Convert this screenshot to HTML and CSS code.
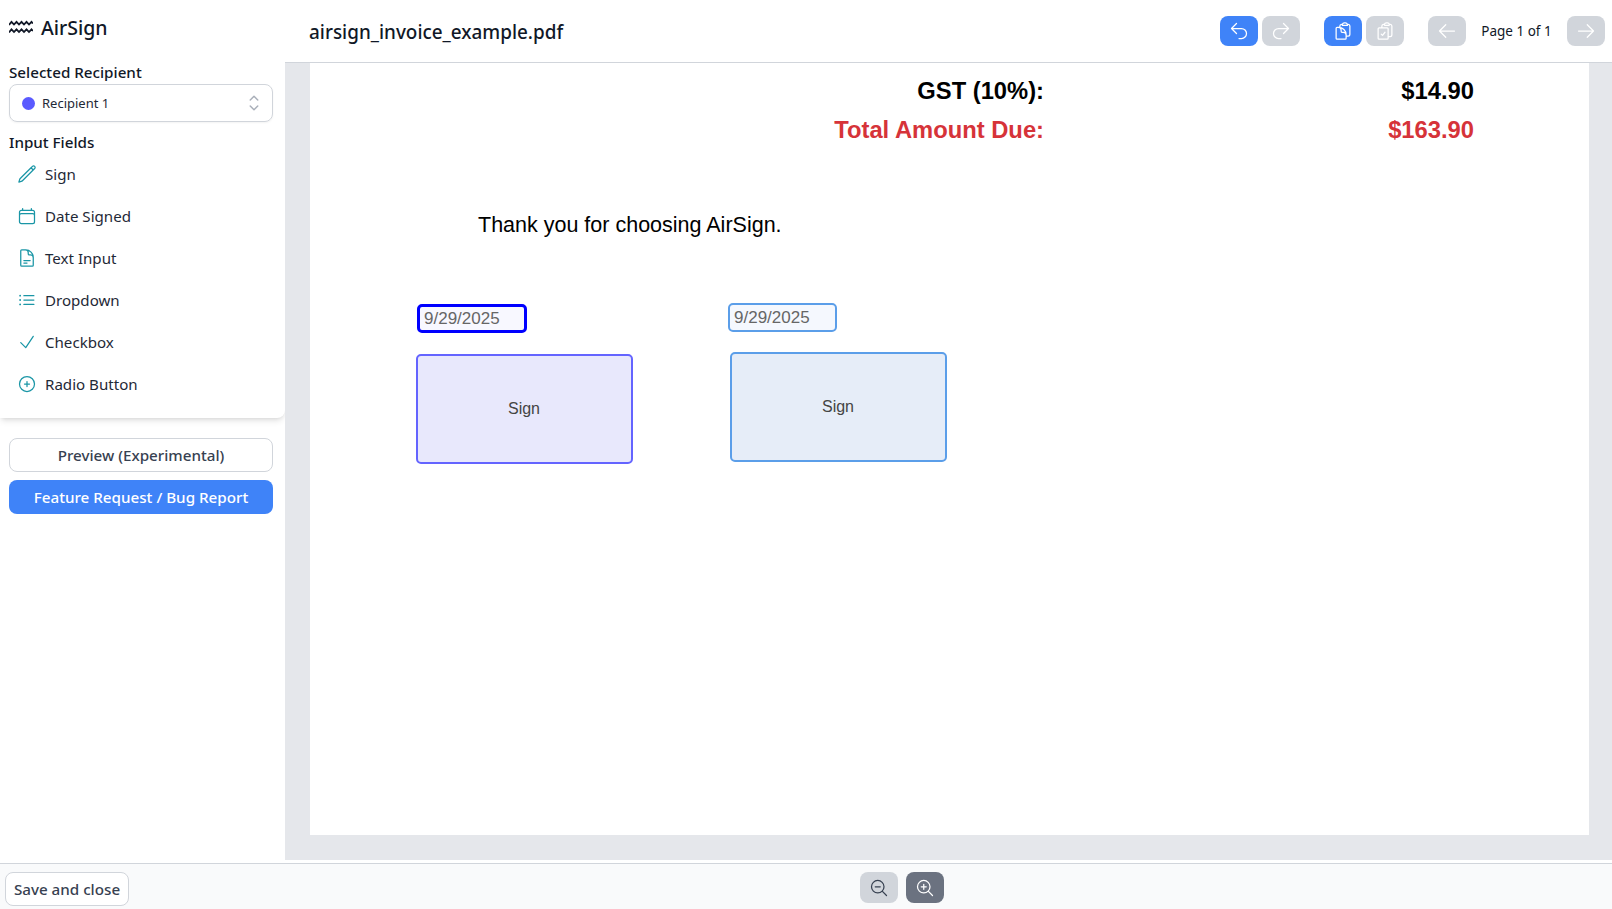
FILE: index.html
```html
<!DOCTYPE html>
<html lang="en">
<head>
<meta charset="utf-8">
<title>AirSign</title>
<link rel="stylesheet" href="styles.css">
</head>
<body>
<div class="app">
  <div class="top">
    <aside class="sidebar">
      <div class="panel">
        <div class="brand">
          <svg class="logo" viewBox="0 0 24 14" fill="none" stroke="currentColor" stroke-width="1.800"><path d="M0 5 2.500 1.800 5 4.500 7.500 1.800 10 4.500 12.500 1.800 15 4.500 17.500 1.800 20 4.500 22.500 1.800 24 3.500"/><path d="M0 12.500 2.500 9.300 5 12 7.500 9.300 10 12 12.500 9.300 15 12 17.500 9.300 20 12 22.500 9.300 24 11"/></svg>
          <span>AirSign</span>
        </div>
        <div class="label label-first">Selected Recipient</div>
        <div class="select">
          <span class="dot"></span>
          <span class="select-text">Recipient 1</span>
          <svg class="chev" viewBox="0 0 24 24" fill="none" stroke="currentColor" stroke-width="1.500"><path stroke-linecap="round" stroke-linejoin="round" d="M8.250 15 12 18.750 15.750 15m-7.500-6L12 5.250 15.750 9"/></svg>
        </div>
        <div class="label label-second">Input Fields</div>
        <ul class="fields">
          <li class="field"><svg class="ficon" viewBox="0 0 24 24" fill="none" stroke="currentColor" stroke-width="1.5"><path stroke-linecap="round" stroke-linejoin="round" d="m16.862 4.487 1.687-1.688a1.875 1.875 0 1 1 2.652 2.652L6.832 19.82a4.5 4.5 0 0 1-1.897 1.13l-2.685.8.8-2.685a4.5 4.5 0 0 1 1.13-1.897L16.863 4.487Zm0 0L19.5 7.125"/></svg>Sign</li>
          <li class="field"><svg class="ficon" viewBox="0 0 24 24" fill="none" stroke="currentColor" stroke-width="1.5"><path stroke-linecap="round" stroke-linejoin="round" d="M6.75 3v2.25M17.25 3v2.25M3 18.75V7.5a2.25 2.25 0 0 1 2.25-2.25h13.5A2.25 2.25 0 0 1 21 7.5v11.25m-18 0A2.25 2.25 0 0 0 5.25 21h13.5A2.25 2.25 0 0 0 21 18.75m-18 0v-7.5A2.25 2.25 0 0 1 5.25 9h13.5A2.25 2.25 0 0 1 21 11.25v7.5"/></svg>Date Signed</li>
          <li class="field"><svg class="ficon" viewBox="0 0 24 24" fill="none" stroke="currentColor" stroke-width="1.5"><path stroke-linecap="round" stroke-linejoin="round" d="M19.5 14.25v-2.625a3.375 3.375 0 0 0-3.375-3.375h-1.5A1.125 1.125 0 0 1 13.5 7.125v-1.5a3.375 3.375 0 0 0-3.375-3.375H8.25m0 12.75h7.5m-7.5 3H12M10.5 2.25H5.625c-.621 0-1.125.504-1.125 1.125v17.25c0 .621.504 1.125 1.125 1.125h12.75c.621 0 1.125-.504 1.125-1.125V11.25a9 9 0 0 0-9-9Z"/></svg>Text Input</li>
          <li class="field"><svg class="ficon" viewBox="0 0 24 24" fill="none" stroke="currentColor" stroke-width="1.5"><path stroke-linecap="round" stroke-linejoin="round" d="M8.25 6.75h12M8.25 12h12m-12 5.25h12M3.75 6.75h.007v.008H3.75V6.75Zm.375 0a.375.375 0 1 1-.75 0 .375.375 0 0 1 .75 0ZM3.75 12h.007v.008H3.75V12Zm.375 0a.375.375 0 1 1-.75 0 .375.375 0 0 1 .75 0Zm-.375 5.25h.007v.008H3.75v-.008Zm.375 0a.375.375 0 1 1-.75 0 .375.375 0 0 1 .75 0Z"/></svg>Dropdown</li>
          <li class="field"><svg class="ficon" viewBox="0 0 24 24" fill="none" stroke="currentColor" stroke-width="1.5"><path stroke-linecap="round" stroke-linejoin="round" d="m4.5 12.75 6 6 9-13.5"/></svg>Checkbox</li>
          <li class="field"><svg class="ficon" viewBox="0 0 24 24" fill="none" stroke="currentColor" stroke-width="1.5"><path stroke-linecap="round" stroke-linejoin="round" d="M12 9v6m3-3H9m12 0a9 9 0 1 1-18 0 9 9 0 0 1 18 0Z"/></svg>Radio Button</li>
        </ul>
      </div>
      <div class="actions">
        <button class="btn btn-outline">Preview (Experimental)</button>
        <button class="btn btn-primary">Feature Request / Bug Report</button>
      </div>
    </aside>
    <main class="main">
      <header class="toolbar">
        <div class="doc-title">airsign_invoice_example.pdf</div>
        <div class="tools">
          <div class="tool-group">
            <button class="tbtn blue"><svg class="ticon" viewBox="0 0 24 24" fill="none" stroke="currentColor" stroke-width="1.5"><path stroke-linecap="round" stroke-linejoin="round" d="M9 15 3 9m0 0 6-6M3 9h12a6 6 0 0 1 0 12h-3"/></svg></button>
            <button class="tbtn gray"><svg class="ticon" viewBox="0 0 24 24" fill="none" stroke="currentColor" stroke-width="1.5"><path stroke-linecap="round" stroke-linejoin="round" d="m15 15 6-6m0 0-6-6m6 6H9a6 6 0 0 0 0 12h3"/></svg></button>
          </div>
          <div class="tool-group">
            <button class="tbtn blue"><svg class="ticon" viewBox="0 0 24 24" fill="none" stroke="currentColor" stroke-width="1.5"><path stroke-linecap="round" stroke-linejoin="round" d="M8.25 7.5V6.108c0-1.135.845-2.098 1.976-2.192.373-.03.748-.057 1.123-.08M15.75 18H18a2.25 2.25 0 0 0 2.25-2.25V6.108c0-1.135-.845-2.098-1.976-2.192a48.424 48.424 0 0 0-1.123-.08M15.75 18.75v-1.875a3.375 3.375 0 0 0-3.375-3.375h-1.5a1.125 1.125 0 0 1-1.125-1.125v-1.5A3.375 3.375 0 0 0 6.375 7.5H5.25m11.9-3.664A2.251 2.251 0 0 0 15 2.25h-1.5a2.251 2.251 0 0 0-2.15 1.586m5.8 0c.065.21.1.433.1.664v.75h-6V4.5c0-.231.035-.454.1-.664M6.75 7.5H4.875c-.621 0-1.125.504-1.125 1.125v12c0 .621.504 1.125 1.125 1.125h9.75c.621 0 1.125-.504 1.125-1.125V16.5a9 9 0 0 0-9-9Z"/></svg></button>
            <button class="tbtn gray"><svg class="ticon" viewBox="0 0 24 24" fill="none" stroke="currentColor" stroke-width="1.5"><path stroke-linecap="round" stroke-linejoin="round" d="M11.35 3.836c-.065.21-.1.433-.1.664 0 .414.336.75.75.75h4.5a.75.75 0 0 0 .75-.75 2.25 2.25 0 0 0-.1-.664m-5.8 0A2.251 2.251 0 0 1 13.5 2.25H15c1.012 0 1.867.668 2.15 1.586m-5.8 0c-.376.023-.75.05-1.124.08C9.095 4.01 8.25 4.973 8.25 6.108V8.25m8.9-4.414c.376.023.75.05 1.124.08 1.131.094 1.976 1.057 1.976 2.192V16.5A2.25 2.25 0 0 1 18 18.75h-2.25m-7.5-10.5H4.875c-.621 0-1.125.504-1.125 1.125v11.25c0 .621.504 1.125 1.125 1.125h9.75c.621 0 1.125-.504 1.125-1.125V18.75m-7.5-10.500h6.375c.621 0 1.125.504 1.125 1.125v9.375m-8.25-3 1.5 1.5 3-3.75"/></svg></button>
          </div>
          <div class="pager">
            <button class="tbtn gray"><svg class="ticon" viewBox="0 0 24 24" fill="none" stroke="currentColor" stroke-width="1.5"><path stroke-linecap="round" stroke-linejoin="round" d="M10.5 19.5 3 12m0 0 7.5-7.5M3 12h18"/></svg></button>
            <span class="page-label">Page 1 of 1</span>
            <button class="tbtn gray"><svg class="ticon" viewBox="0 0 24 24" fill="none" stroke="currentColor" stroke-width="1.5"><path stroke-linecap="round" stroke-linejoin="round" d="M13.5 4.5 21 12m0 0-7.5 7.5M21 12H3"/></svg></button>
          </div>
        </div>
      </header>
      <div class="viewer">
        <div class="page">
          <div class="pdf-row pdf-gst"><span class="pdf-k">GST (10%):</span><span class="pdf-v">$14.90</span></div>
          <div class="pdf-row pdf-total"><span class="pdf-k">Total Amount Due:</span><span class="pdf-v">$163.90</span></div>
          <div class="pdf-thanks">Thank you for choosing AirSign.</div>
          <div class="date date-a">9/29/2025</div>
          <div class="date date-b">9/29/2025</div>
          <div class="sign sign-a">Sign</div>
          <div class="sign sign-b">Sign</div>
        </div>
      </div>
    </main>
  </div>
  <footer class="footer">
    <button class="btn-save">Save and close</button>
    <div class="zoom">
      <button class="zbtn zbtn-light"><svg class="zicon" viewBox="0 0 24 24" fill="none" stroke="currentColor" stroke-width="1.5"><path stroke-linecap="round" stroke-linejoin="round" d="m21 21-5.197-5.197m0 0A7.5 7.5 0 1 0 5.196 5.196a7.5 7.5 0 0 0 10.607 10.607ZM13.5 10.5h-6"/></svg></button>
      <button class="zbtn zbtn-dark"><svg class="zicon" viewBox="0 0 24 24" fill="none" stroke="currentColor" stroke-width="1.5"><path stroke-linecap="round" stroke-linejoin="round" d="m21 21-5.197-5.197m0 0A7.5 7.5 0 1 0 5.196 5.196a7.5 7.5 0 0 0 10.607 10.607ZM10.5 7.5v6m3-3h-6"/></svg></button>
    </div>
  </footer>
</div>
</body>
</html>
```
FILE: styles.css
```css
* { box-sizing: border-box; }
html, body { margin: 0; height: 100%; background: #fff; overflow: hidden; }
body { font-family: "Noto Sans", "Open Sans", sans-serif; color: #111827; }
button { font-family: inherit; cursor: pointer; padding: 0; }
.app { height: 909px; display: flex; flex-direction: column; }
.top { flex: 1; min-height: 0; display: flex; }

.sidebar { width: 285px; flex: none; display: flex; flex-direction: column; background: #fff; }
.panel { height: 418px; padding: 0 9px; border-radius: 0 0 8px 0; box-shadow: 0 4px 6px -1px rgba(0,0,0,.1), 0 2px 4px -2px rgba(0,0,0,.1); }
.brand { height: 54px; display: flex; align-items: center; gap: 8px; font-size: 19.500px; font-weight: 500; color: #111827; }
.logo { width: 24px; height: 14px; color: #111827; flex: none; }
.label { font-size: 15.200px; font-weight: 500; line-height: 20px; color: #111827; }
.label-first { margin-top: 8px; }
.label-second { margin-top: 10px; }
.select { margin-top: 2px; height: 38px; width: 264px; border: 1px solid #d1d5db; border-radius: 8px; display: flex; align-items: center; padding: 0 6px 0 12px; box-shadow: 0 1px 2px rgba(0,0,0,.05); }
.dot { width: 13px; height: 13px; border-radius: 50%; background: #5a5aff; flex: none; }
.select-text { margin-left: 7px; font-size: 13px; color: #1f2937; flex: 1; }
.chev { width: 24px; height: 24px; color: #aab0ba; flex: none; }
.fields { list-style: none; margin: 1px 0 0; padding: 0; }
.field { height: 42px; display: flex; align-items: center; padding-left: 8px; gap: 8px; font-size: 15.100px; color: #1f2937; }
.ficon { width: 20px; height: 20px; flex: none; color: #1a96a6; }

.actions { margin-top: 20px; padding: 0 12px 0 9px; display: flex; flex-direction: column; gap: 8px; }
.btn { height: 34px; border-radius: 8px; font-size: 15.200px; font-weight: 500; }
.btn-outline { background: #fff; border: 1px solid #d1d5db; color: #374151; }
.btn-primary { background: #3f83f8; border: 0; color: #fff; }

.main { flex: 1; min-width: 0; display: flex; flex-direction: column; background: #fff; }
.toolbar { height: 63px; flex: none; display: flex; align-items: center; justify-content: space-between; padding: 0 7px 1px 24px; border-bottom: 1px solid #d1d5db; background: #fff; }
.doc-title { font-size: 18.900px; font-weight: 500; color: #111827; margin-top: 2px; }
.tools { display: flex; gap: 24px; }
.tool-group { display: flex; gap: 4px; }
.pager { display: flex; align-items: center; }
.page-label { width: 101px; text-align: center; font-size: 13.500px; color: #111827; }
.tbtn { width: 38px; height: 30px; border: 0; border-radius: 8px; display: flex; align-items: center; justify-content: center; color: #fff; }
.blue { background: #3f83f8; }
.gray { background: #d1d5db; }
.ticon { width: 20px; height: 20px; }

.viewer { flex: 1; min-height: 0; background: #e5e7eb; padding: 0 23px 25px 25px; margin-bottom: 3px; }
.page { position: relative; height: 100%; background: #fff; font-family: "Liberation Sans", Arial, sans-serif; }
.pdf-row { position: absolute; left: 0; width: 100%; height: 30px; line-height: 30px; font-size: 23.750px; font-weight: 700; color: #000; }
.pdf-gst { top: 13px; }
.pdf-total { top: 52px; color: #d63339; }
.pdf-k { position: absolute; right: 545px; white-space: nowrap; }
.pdf-v { position: absolute; right: 115px; white-space: nowrap; }
.pdf-thanks { position: absolute; left: 168px; top: 147px; font-size: 21.500px; line-height: 30px; color: #000; white-space: nowrap; }
.date { position: absolute; font-size: 17px; color: #666; display: flex; align-items: center; padding-left: 4px; border-radius: 5px; }
.date-a { left: 107px; top: 241px; width: 110px; height: 29px; border: 3px solid #0000ff; background: #f8f8ff; }
.date-b { left: 418px; top: 240px; width: 109px; height: 29px; border: 2px solid #5b9ee9; background: #f5f8fe; }
.sign { position: absolute; width: 217px; height: 110px; border-radius: 5px; display: flex; align-items: center; justify-content: center; font-size: 16px; color: #444; }
.sign-a { left: 105.500px; top: 291px; border: 2px solid #6464ff; background: #e8e8fc; }
.sign-b { left: 419.500px; top: 289px; border: 2px solid #5b9ee9; background: #e6edf8; }

.footer { height: 46px; flex: none; position: relative; border-top: 1px solid #d1d5db; background: #f9fafb; display: flex; align-items: center; justify-content: center; }
.btn-save { position: absolute; left: 5px; top: 8px; width: 124px; height: 34px; border: 1px solid #d1d5db; border-radius: 8px; background: #fff; font-size: 15.200px; font-weight: 500; color: #374151; }
.zoom { display: flex; gap: 8px; margin: 2px 0 0 191px; }
.zbtn { width: 38px; height: 31px; border: 0; border-radius: 8px; display: flex; align-items: center; justify-content: center; }
.zbtn-light { background: #d1d5db; color: #374151; }
.zbtn-dark { background: #6b7280; color: #fff; }
.zicon { width: 20px; height: 20px; }
```
